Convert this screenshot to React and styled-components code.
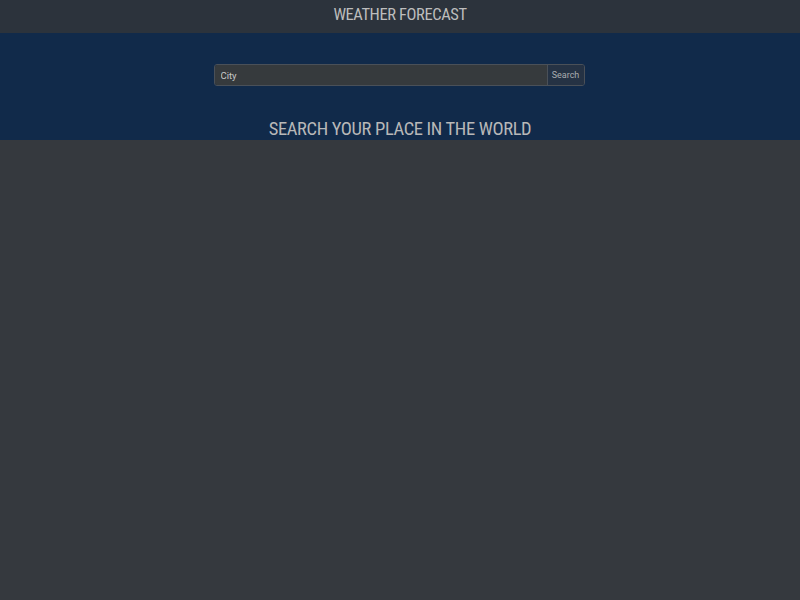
import styled, { createGlobalStyle } from "styled-components";
import React from "react";

const GlobalStyle = createGlobalStyle`
    html, body {
        margin: 0;
        padding: 0;
        background: #35393e;
        font-family: Roboto, "Liberation Sans", sans-serif;
    }
`

const Page = styled.div`
    min-height: 600px;
    background: #35393e;
    display: flex;
    flex-direction: column;
`

const Header = styled.header`
    height: 33px;
    background: #2c333c;
    display: flex;
    justify-content: center;
    align-items: center;
    padding-bottom: 4px;
    box-sizing: border-box;
`

const Title = styled.h1`
    margin: 0;
    font-family: "Roboto Condensed", Roboto, sans-serif;
    font-size: 16.5px;
    font-weight: 400;
    color: #bdbdbd;
    letter-spacing: -0.4px;
`

const Hero = styled.section`
    height: 107px;
    background: #112a4a;
    display: flex;
    flex-direction: column;
    align-items: center;
    padding-top: 31px;
    box-sizing: border-box;
`

const SearchBar = styled.form`
    width: 371px;
    height: 23px;
    display: flex;
    border: 1px solid #4a5058;
    border-radius: 3px;
    overflow: hidden;
    box-sizing: border-box;
    margin-left: -2px;
`

const CityInput = styled.input`
    flex: 1;
    background: #363a3d;
    border: none;
    outline: none;
    color: #c8c8c8;
    font-family: Roboto, "Liberation Sans", sans-serif;
    font-size: 9.5px;
    padding: 0 6px;

    &::placeholder {
        color: #c8c8c8;
    }
`

const SearchButton = styled.button`
    width: 37px;
    background: #253244;
    border: none;
    border-left: 1px solid #4a5058;
    color: #a9acb0;
    font-family: Roboto, "Liberation Sans", sans-serif;
    font-size: 9px;
    padding: 0;
    cursor: pointer;
`

const Subtitle = styled.h2`
    margin: 32px 0 0;
    font-family: "Roboto Condensed", Roboto, sans-serif;
    font-size: 18.5px;
    font-weight: 400;
    color: #b8b8b8;
    letter-spacing: -0.35px;
`

export default function App() {
    return (
        <Page>
            <GlobalStyle />
            <Header>
                <Title>WEATHER FORECAST</Title>
            </Header>
            <Hero>
                <SearchBar onSubmit={e => e.preventDefault()}>
                    <CityInput placeholder="City" />
                    <SearchButton type="submit">Search</SearchButton>
                </SearchBar>
                <Subtitle>SEARCH YOUR PLACE IN THE WORLD</Subtitle>
            </Hero>
        </Page>
    );
}
